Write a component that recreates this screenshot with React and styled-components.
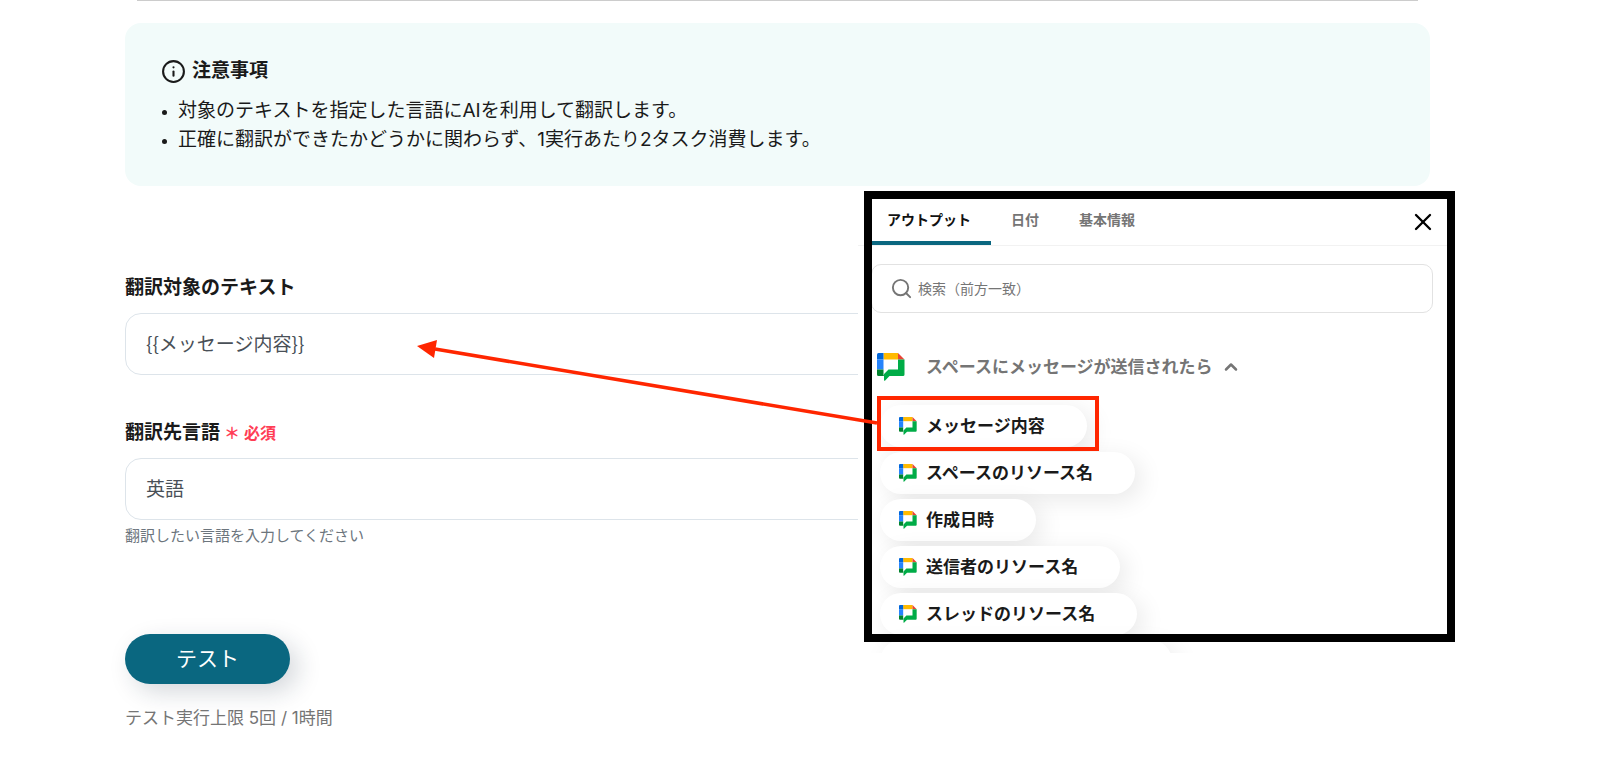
import styled, { createGlobalStyle } from 'styled-components';
import { ChevronUp, Info, Search, X } from 'lucide-react';

const tabs = ['アウトプット', '日付', '基本情報'];

const outputs = [
  'メッセージ内容',
  'スペースのリソース名',
  '作成日時',
  '送信者のリソース名',
  'スレッドのリソース名',
];

const ChatLogo = ({ size }) => {
  return (
    <svg width={size} height={size} viewBox='0 0 28 28' aria-hidden='true'>
      <path d='M6.5 0H21v6.5H6.5z' fill='#ffba00' />
      <path d='M21 0l6.5 6.5H21z' fill='#ea4335' />
      <path d='M1.5 0h5v6.5H0v-5Q0 0 1.5 0z' fill='#0066da' />
      <path d='M0 6.5h6.5v10H0z' fill='#2684fc' />
      <path d='M0 16.5h6.5v5l.5 1.500H1.500Q0 23 0 21.500z' fill='#00832d' />
      <path
        d='M21 6.5h6.500v15q0 1.500-1.500 1.500H12.500l-4.300 4.400q-1.200.8-1.200-.6V21l4.500-4.500H21z'
        fill='#00ac47'
      />
    </svg>
  );
};

const Notice = () => {
  return (
    <NoticeBox>
      <h2>
        <Info size={25} strokeWidth={2} />
        注意事項
      </h2>
      <ul>
        <li>対象のテキストを指定した言語にAIを利用して翻訳します。</li>
        <li>
          正確に翻訳ができたかどうかに関わらず、1実行あたり2タスク消費します。
        </li>
      </ul>
    </NoticeBox>
  );
};

const OutputPicker = () => {
  return (
    <Overlay>
      <Sheet>
        <TabBar>
          {tabs.map((tab, index) => (
            <Tab type='button' key={tab} $active={index === 0}>
              {tab}
            </Tab>
          ))}
          <CloseButton type='button' aria-label='閉じる'>
            <X size={28} strokeWidth={2} />
          </CloseButton>
        </TabBar>
        <SearchBox>
          <Search size={23} strokeWidth={2} />
          <input
            type='search'
            aria-label='検索'
            placeholder='検索（前方一致）'
          />
        </SearchBox>
        <GroupTitle type='button'>
          <ChatLogo size={28} />
          <span>スペースにメッセージが送信されたら</span>
          <ChevronUp size={20} strokeWidth={3} />
        </GroupTitle>
        <ChipList>
          {outputs.map((name) => (
            <li key={name}>
              <Chip type='button'>
                <ChatLogo size={18} />
                {name}
              </Chip>
            </li>
          ))}
          <li>
            <CutChip />
          </li>
        </ChipList>
      </Sheet>
      <Frame />
      <Highlight />
      <Arrow width='462' height='94' viewBox='0 0 462 94' aria-hidden='true'>
        <path d='M19 13L461 87' stroke='#ff2600' strokeWidth='3.6' />
        <path d='M1 10L21 4L18 22z' fill='#ff2600' />
      </Arrow>
    </Overlay>
  );
};

const App = () => {
  return (
    <Page>
      <GlobalStyle />
      <PreviousEdge />
      <Notice />
      <form onSubmit={(e) => e.preventDefault()}>
        <Field $first>
          <label htmlFor='source'>翻訳対象のテキスト</label>
          <input id='source' type='text' defaultValue='{{メッセージ内容}}' />
        </Field>
        <Field>
          <label htmlFor='language'>
            翻訳先言語
            <Required>
              <span>＊</span>
              <span>必須</span>
            </Required>
          </label>
          <input id='language' type='text' defaultValue='英語' />
          <p>翻訳したい言語を入力してください</p>
        </Field>
        <TestButton type='submit'>テスト</TestButton>
        <Limit>テスト実行上限 5回 / 1時間</Limit>
      </form>
      <OutputPicker />
    </Page>
  );
};

const GlobalStyle = createGlobalStyle`
  * {
    box-sizing: border-box;
    margin: 0;
    padding: 0;
  }
  body {
    background: #fff;
    color: #1a1a1a;
    font-family: Inter, 'Noto Sans CJK JP', sans-serif;
    line-height: 24px;
  }
  button,
  input {
    font-family: inherit;
    line-height: 24px;
    border: none;
    background: none;
  }
  button {
    cursor: pointer;
  }
  ul {
    list-style: none;
  }
`;

const Page = styled.main`
  position: relative;
  min-height: 100vh;
  padding: 0 170px 32px 125px;
`;

const PreviousEdge = styled.div`
  height: 1px;
  margin: 0 12px 22px;
  background: #ccc;
`;

const NoticeBox = styled.section`
  padding: 33px 36px 32px;
  border-radius: 16px;
  background: #f2fbfa;
  h2 {
    display: flex;
    align-items: center;
    gap: 6px;
    height: 30px;
    font-size: 19px;
  }
  ul {
    margin-top: 10px;
    padding-left: 17px;
    list-style: disc;
  }
  li {
    font-size: 19px;
    line-height: 29px;
  }
  li::marker {
    font-size: 14px;
  }
`;

const Field = styled.div`
  margin-top: ${(props) => (props.$first ? '88px' : '44px')};
  label {
    display: flex;
    align-items: center;
    gap: 4px;
    height: 28px;
    margin-bottom: 11px;
    font-size: 19px;
    font-weight: 700;
  }
  input {
    display: block;
    width: 100%;
    height: 62px;
    padding: 0 20px 4px;
    border: 1px solid #dde4ea;
    border-radius: 16px;
    color: #495057;
    font-family: 'Noto Sans CJK JP', sans-serif;
    font-size: 19px;
  }
  p {
    margin-top: 5px;
    color: #6c757d;
    font-size: 15px;
    line-height: 22px;
  }
`;

const Required = styled.span`
  display: flex;
  gap: 4px;
  color: #ff3d55;
  font-size: 16px;
`;

const TestButton = styled.button`
  display: block;
  height: 50px;
  margin-top: 87px;
  padding: 0 51px;
  border-radius: 25px;
  background: #0a6780;
  box-shadow: 8px 8px 24px rgba(20, 40, 60, 0.18);
  color: #fff;
  font-size: 21px;
`;

const Limit = styled.p`
  margin-top: 22px;
  color: #757575;
  font-size: 17px;
`;

const Overlay = styled.aside`
  position: absolute;
  top: 190px;
  right: 145px;
  left: calc(54% - 6px);
  height: 463px;
`;

const Sheet = styled.div`
  height: 100%;
  margin-right: 7px;
  overflow: hidden;
  background: #fff;
`;

const Frame = styled.div`
  position: absolute;
  inset: 1px 0 11px 6px;
  border: 8px solid #000;
  pointer-events: none;
`;

const Highlight = styled.div`
  position: absolute;
  top: 206px;
  left: 19px;
  width: 222px;
  height: 55px;
  border: 4px solid #ff2600;
  pointer-events: none;
`;

const Arrow = styled.svg`
  position: absolute;
  top: 146px;
  left: -442px;
  pointer-events: none;
`;

const TabBar = styled.div`
  display: flex;
  height: 56px;
  padding: 8px 11px 0 9px;
  border-bottom: 1px solid #f2f2f2;
`;

const Tab = styled.button`
  padding: 0 20px;
  border-bottom: 4px solid ${(props) => (props.$active ? '#0a6780' : 'transparent')};
  border-radius: 0 4px 0 0;
  color: ${(props) => (props.$active ? '#111' : '#757575')};
  font-size: 14px;
  font-weight: 700;
`;

const CloseButton = styled.button`
  display: flex;
  align-items: center;
  margin-left: auto;
  color: #000;
`;

const SearchBox = styled.div`
  display: flex;
  align-items: center;
  gap: 5px;
  height: 49px;
  margin: 18px 15px 0 13px;
  padding: 0 18px;
  border: 1px solid #e2e2e2;
  border-radius: 10px;
  color: #757575;
  input {
    flex: 1;
    height: 100%;
    font-size: 14px;
    outline: none;
  }
  input::placeholder {
    color: #757575;
  }
`;

const GroupTitle = styled.button`
  display: flex;
  align-items: center;
  height: 32px;
  margin: 38px 0 0 19px;
  color: #757575;
  font-size: 17px;
  font-weight: 700;
  span {
    margin: 0 8px 0 21px;
  }
`;

const ChipList = styled.ul`
  display: flex;
  flex-direction: column;
  gap: 5px;
  padding: 22px 0 0 22px;
`;

const Chip = styled.button`
  display: flex;
  align-items: center;
  gap: 9px;
  height: 42px;
  padding: 0 42px 0 19px;
  border-radius: 21px;
  background: #fff;
  box-shadow: 6px 6px 24px rgba(0, 0, 0, 0.09);
  color: #1a1a1a;
  font-size: 17px;
  font-weight: 700;
`;

const CutChip = styled.div`
  width: 292px;
  height: 42px;
  border-radius: 21px;
  background: #fff;
  box-shadow: 6px 6px 24px rgba(0, 0, 0, 0.09);
`;

export default App;
